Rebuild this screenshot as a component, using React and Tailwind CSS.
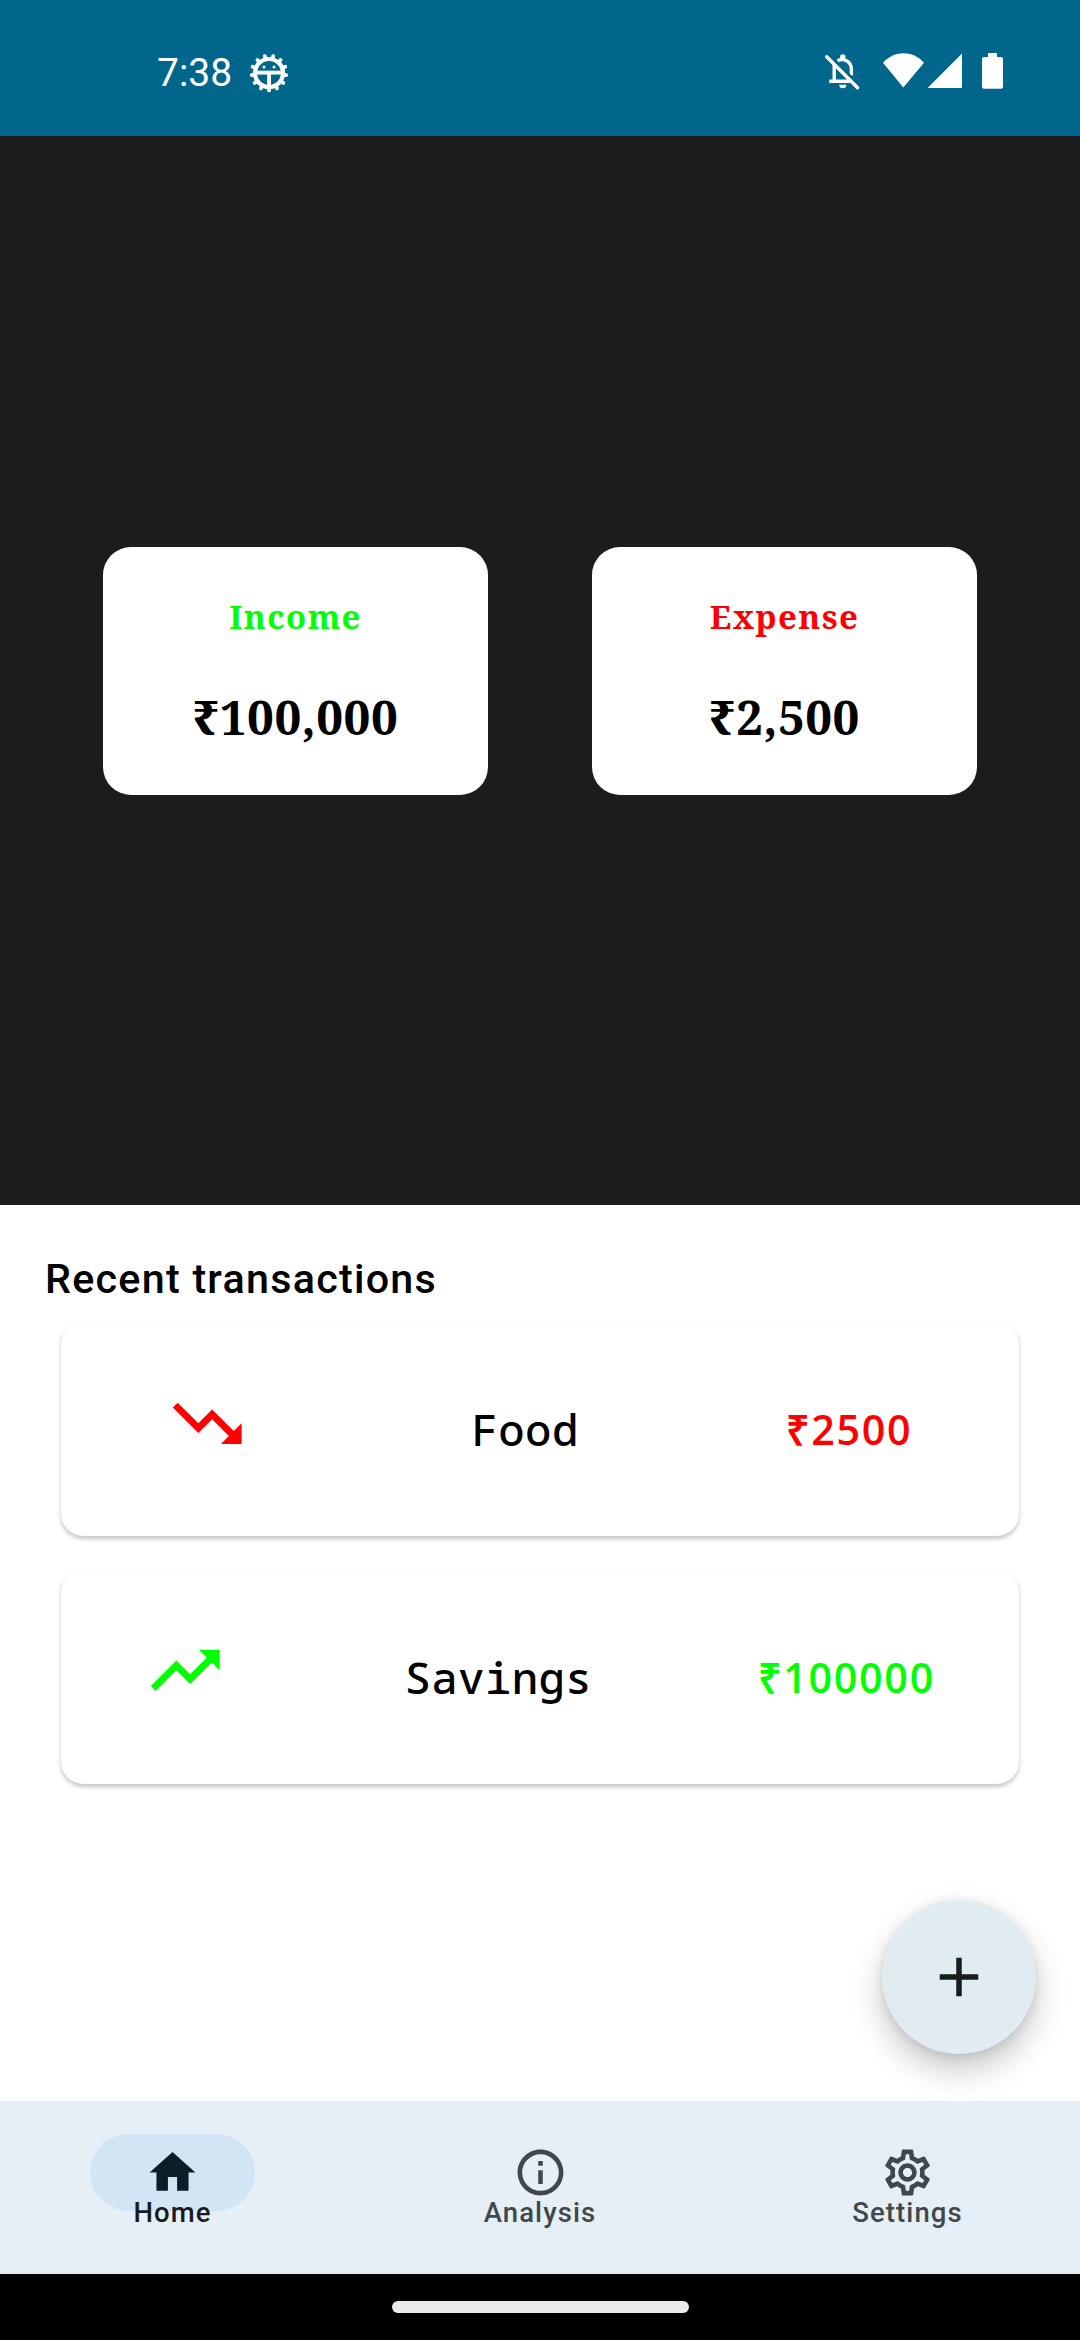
import { MdTrendingDown, MdTrendingUp, MdHome, MdOutlineInfo, MdOutlineSettings, MdAdd } from "react-icons/md";

const teeth = Array.from({ length: 13 }, (_, i) => (i * 360) / 13);

function BeetleIcon() {
  return (
    <svg className="h-10 w-10" viewBox="-20 -20 40 40" fill="none" stroke="#fff">
      {teeth.map((a) => (
        <path key={a} d="M0 14V17.4" strokeWidth="3.8" strokeLinecap="round" transform={`rotate(${a})`} />
      ))}
      <circle r="14" strokeWidth="4.2" />
      <path d="M-14 -0.4H14" strokeWidth="3.9" />
      <path d="M0 0V14" strokeWidth="3.9" />
      <circle cx="-5" cy="-6" r="1.5" fill="#fff" stroke="none" />
      <circle cx="5" cy="-6" r="1.5" fill="#fff" stroke="none" />
    </svg>
  );
}

function BellOffIcon() {
  return (
    <svg className="h-11 w-11" viewBox="0 0 44 44" fill="none" stroke="#fff" strokeWidth="3.4">
      <path d="M14.2 14V31M9.3 31.3H31.5" />
      <path d="M17.5 10.8C23 7.8 31.4 11 31.4 19.5V25.5" />
      <circle cx="22.8" cy="7" r="2.7" fill="#fff" stroke="none" />
      <path d="M19.3 34.8H26.3A3.5 3.5 0 0 1 19.3 34.8Z" fill="#fff" stroke="none" />
      <path d="M8.9 4.6L40.4 36.1" stroke="#00668B" strokeWidth="2.6" />
      <path d="M6.7 6.8L37.6 37.7" strokeLinecap="round" />
    </svg>
  );
}

function StatusBar() {
  return (
    <header className="flex h-[136px] items-start justify-between bg-[#00668B] pl-[157px] pr-[77px] text-white">
      <div className="flex items-center gap-[17px] pt-[51px]">
        <span className="mt-px font-[Roboto] text-[39px] leading-[42px]">7:38</span>
        <BeetleIcon />
      </div>
      <div className="flex pt-[50px]">
        <BellOffIcon />
        <svg className="ml-[19px] h-11 w-[79px]" viewBox="0 0 79 44" fill="#fff">
          <path d="M20.3 37.5L0 12.7C11.5 .2 29.5 .2 41 12.7Z" />
          <path d="M44.6 38H79V3.6Z" />
        </svg>
        <svg className="ml-5 h-11 w-[21px]" viewBox="0 0 21 44" fill="#fff">
          <path d="M6 3H15V7H19A2 2 0 0 1 21 9V36.7A2 2 0 0 1 19 38.7H2A2 2 0 0 1 0 36.7V9A2 2 0 0 1 2 7H6Z" />
        </svg>
      </div>
    </header>
  );
}

function SummaryCard({ label, amount, labelClass }) {
  return (
    <div className="flex h-[248px] w-[385px] flex-col items-center rounded-[28px] bg-white pt-[47px] font-bold font-['Noto_Serif','Droid_Serif','DejaVu_Serif_Condensed','DejaVu_Serif',serif]">
      <div className={labelClass}>{label}</div>
      <div className="mt-[45px] text-[47.5px] leading-[64px] tracking-[0.5px] text-black">{amount}</div>
    </div>
  );
}

function TransactionCard({ Icon, iconClass, name, nameClass, amount, amountClass }) {
  return (
    <div className="flex h-[215px] rounded-[22px] bg-white shadow-[0_3px_4px_rgba(0,0,0,0.22),0_0_1.5px_rgba(0,0,0,0.09)]">
      <Icon className={iconClass} />
      <span className={nameClass}>{name}</span>
      <span className={amountClass}>{amount}</span>
    </div>
  );
}

function NavItem({ Icon, label, active }) {
  return (
    <div className="flex w-[165px] flex-col items-center pt-[33px]">
      <div className={active ? "flex h-[77px] w-[165px] items-center justify-center rounded-full bg-[#D1E5F4] text-[#0A1E28]" : "flex h-[77px] w-[165px] items-center justify-center text-[#40484D]"}>
        <Icon className="h-[55px] w-[55px]" />
      </div>
      <span className={active ? "-mt-[14px] font-[Roboto] text-[27.5px] font-medium leading-[32px] tracking-[1.1px] text-[#191C1E]" : "-mt-[14px] font-[Roboto] text-[27.5px] font-medium leading-[32px] tracking-[1.1px] text-[#40484D]"}>
        {label}
      </span>
    </div>
  );
}

export default function App() {
  return (
    <div className="flex h-[2340px] w-[1080px] flex-col overflow-hidden bg-white">
      <StatusBar />
      <section className="flex h-[1069px] items-start justify-center gap-[104px] bg-[#1B1C1E] pt-[411px]">
        <SummaryCard label="Income" amount="₹100,000" labelClass="text-[33px] leading-[46px] tracking-[1.4px] text-[#00FF00]" />
        <SummaryCard label="Expense" amount="₹2,500" labelClass="text-[33px] leading-[46px] tracking-[1.4px] text-[#FF0000]" />
      </section>
      <main className="relative flex h-[896px] flex-col">
        <h1 className="ml-[45px] mt-[49px] font-[Roboto] text-[41.25px] font-medium leading-[50px] tracking-[1.25px] text-black">Recent transactions</h1>
        <div className="mx-[61px] mt-[17px] flex flex-col gap-[33px]">
          <TransactionCard
            Icon={MdTrendingDown}
            iconClass="ml-[105px] mt-[61px] h-[82.5px] w-[82.5px] shrink-0 text-[#FF0000]"
            name="Food"
            nameClass="ml-[223px] mt-[80px] w-[110px] font-['Noto_Sans_Mono','Droid_Sans_Mono','DejaVu_Sans_Mono',monospace] text-[44px] font-medium leading-[56px] tracking-[0.4px] text-black"
            amount="₹2500"
            amountClass="ml-[204px] mt-[80px] font-['Open_Sans'] text-[41.25px] font-semibold leading-[56px] tracking-[1.7px] text-[#FF0000]"
          />
          <TransactionCard
            Icon={MdTrendingUp}
            iconClass="ml-[83px] mt-[60px] h-[82.5px] w-[82.5px] shrink-0 text-[#00FF00]"
            name="Savings"
            nameClass="ml-[178px] mt-[80px] w-[190px] font-['Noto_Sans_Mono','Droid_Sans_Mono','DejaVu_Sans_Mono',monospace] text-[44px] font-medium leading-[56px] tracking-[0.4px] text-black"
            amount="₹100000"
            amountClass="ml-[163px] mt-[80px] font-['Open_Sans'] text-[41.25px] font-semibold leading-[56px] tracking-[1.7px] text-[#00FF00]"
          />
        </div>
        <button className="absolute bottom-[47px] right-[44px] flex h-[154px] w-[154px] items-center justify-center rounded-full bg-[#E1ECF2] text-[#191C1E] shadow-[0_16px_32px_rgba(0,0,0,0.22),0_2px_10px_rgba(0,0,0,0.10)]">
          <MdAdd className="h-[66px] w-[66px]" />
        </button>
      </main>
      <nav className="relative flex h-[173px] justify-between bg-[#E7EFF6] px-[90px]">
        <NavItem Icon={MdHome} label="Home" active />
        <NavItem Icon={MdOutlineInfo} label="Analysis" />
        <NavItem Icon={MdOutlineSettings} label="Settings" />
      </nav>
      <footer className="flex h-[66px] justify-center bg-black pt-[27px]">
        <div className="h-[12px] w-[297px] rounded-full bg-[#EBEBEB]" />
      </footer>
    </div>
  );
}
